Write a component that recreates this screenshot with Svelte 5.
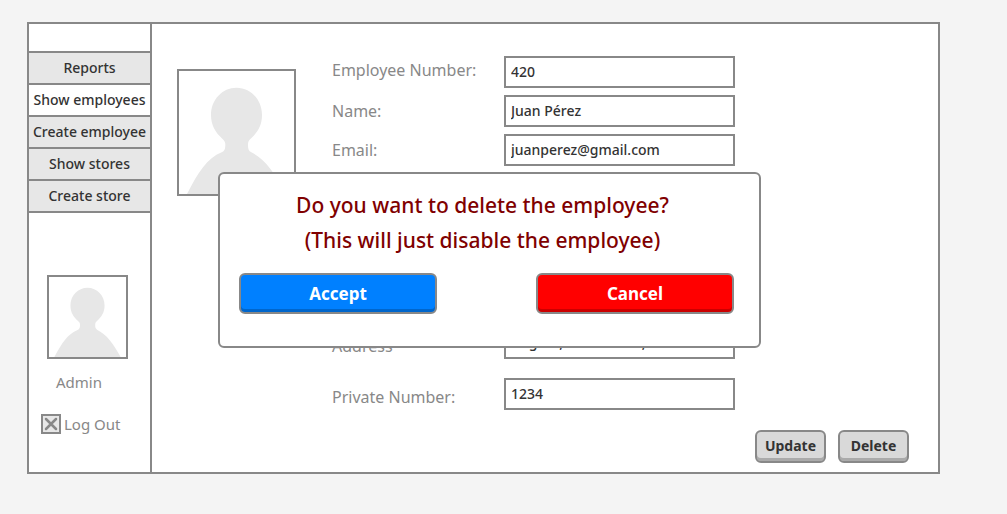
<script>
  const navItems = [
    { label: 'Reports', active: false },
    { label: 'Show employees', active: true },
    { label: 'Create employee', active: false },
    { label: 'Show stores', active: false },
    { label: 'Create store', active: false }
  ];

  let fields = $state([
    { id: 'number', label: 'Employee Number:', value: '420' },
    { id: 'name', label: 'Name:', value: 'Juan Pérez' },
    { id: 'email', label: 'Email:', value: 'juanperez@gmail.com' },
    { id: 'address', label: 'Address', value: 'Bogotá, Calle Norte, 12' },
    { id: 'private', label: 'Private Number:', value: '1234' }
  ]);
</script>

{#snippet silhouette()}
  <svg viewBox="0 0 345 369" preserveAspectRatio="none" aria-hidden="true">
    <path
      d="M172.500 50C130 50 96 86 96 132C96 164 110 185 130 203C137 209 139 214 139 221C139 232 137 240 128 244C84 262 58 304 24 369H321C286 304 258 265 217 244C209 240 207 233 207 224C207 213 208 209 215 203C235 185 249 164 249 132C249 86 215 50 172.500 50Z"
      fill="#e7e7e7"
    />
  </svg>
{/snippet}

<div class="page">
  <div class="frame">
    <aside class="sidebar">
      <nav>
        {#each navItems as item}
          <button type="button" class="nav-item" class:active={item.active}>{item.label}</button>
        {/each}
      </nav>
      <div class="photo small">{@render silhouette()}</div>
      <p class="user">Admin</p>
      <button type="button" class="logout">
        <svg viewBox="0 0 20 20" aria-hidden="true">
          <rect x="1" y="1" width="18" height="18" fill="#e7e7e7" stroke="#888" stroke-width="2" />
          <path d="M5 5L15 15M15 5L5 15" stroke="#888" stroke-width="2.500" stroke-linecap="round" />
        </svg>
        <span>Log Out</span>
      </button>
    </aside>

    <main>
      <div class="details">
        <div class="photo large">{@render silhouette()}</div>
        <form class="fields">
          {#each fields as field}
            <div class="field {field.id}">
              <label for={field.id}>{field.label}</label>
              <input id={field.id} type="text" bind:value={field.value} />
            </div>
          {/each}
        </form>
      </div>
      <div class="actions">
        <button type="button">Update</button>
        <button type="button">Delete</button>
      </div>
    </main>

    <div class="dialog" role="dialog" aria-modal="true" aria-labelledby="question">
      <p id="question">Do you want to delete the employee?<br />(This will just disable the employee)</p>
      <div class="choices">
        <button type="button" class="accept">Accept</button>
        <button type="button" class="cancel">Cancel</button>
      </div>
    </div>
  </div>
</div>

<style>
  :global(body) {
    background: #f4f4f4;
  }

  .page {
    box-sizing: border-box;
    padding: 22px 67px 40px 27px;
    font-family: 'Noto Sans', sans-serif;
    color: #888;
  }

  .page * {
    box-sizing: border-box;
  }

  button,
  input {
    font-family: inherit;
    margin: 0;
  }

  .frame {
    position: relative;
    display: flex;
    border: 2px solid #888;
    background: #fff;
  }

  .sidebar {
    flex: none;
    width: 123px;
    border-right: 2px solid #888;
    padding-top: 27px;
  }

  nav {
    display: flex;
    flex-direction: column;
    border-bottom: 2px solid #888;
  }

  .nav-item {
    height: 32px;
    padding: 0 0 2px;
    border: 0;
    border-top: 2px solid #888;
    background: #e7e7e7;
    color: #333;
    font-size: 14px;
    font-weight: 500;
    white-space: nowrap;
  }

  .nav-item.active {
    background: #fff;
  }

  .photo {
    flex: none;
    border: 2px solid #888;
    background: #fff;
  }

  .photo svg {
    display: block;
    width: 100%;
    height: 100%;
  }

  .small {
    width: 81px;
    height: 84px;
    margin: 62px 0 0 18px;
  }

  .large {
    width: 119px;
    height: 127px;
    margin-top: 13px;
  }

  .user {
    margin: 11px 0 0 27px;
    font-size: 15px;
    line-height: 24px;
  }

  .logout {
    display: flex;
    align-items: center;
    gap: 3px;
    margin: 18px 0 0 12px;
    padding: 0;
    border: 0;
    background: none;
    color: inherit;
    font-size: 15px;
    line-height: 24px;
  }

  .logout svg {
    width: 20px;
    height: 20px;
  }

  main {
    flex: 1;
    padding: 32px 29px 9px 25px;
  }

  .details {
    display: flex;
    align-items: flex-start;
    gap: 36px;
  }

  .fields {
    flex: 1;
    display: flex;
    flex-direction: column;
    gap: 7px;
  }

  .field {
    display: flex;
    align-items: center;
  }

  .number label {
    padding-bottom: 4px;
  }

  .address {
    margin-top: 154px;
  }

  .private {
    margin-top: 12px;
  }

  .address label,
  .private label {
    padding-top: 6px;
  }

  label {
    flex: none;
    width: 172px;
    font-size: 16px;
    line-height: 24px;
  }

  input {
    width: 100%;
    max-width: 231px;
    height: 32px;
    padding: 0 5px 2px;
    border: 2px solid #888;
    border-radius: 0;
    background: #fff;
    color: #333;
    font-size: 14px;
    font-weight: 500;
  }

  .actions {
    display: flex;
    justify-content: flex-end;
    gap: 12px;
    margin-top: 20px;
  }

  .actions button {
    width: 71px;
    height: 33px;
    padding: 0 0 2px;
    border: 2px solid #888;
    border-radius: 6px;
    background: #d9d9d9;
    box-shadow: inset 0 -3px #aaa;
    color: #333;
    font-size: 14px;
    font-weight: 700;
  }

  .dialog {
    position: absolute;
    top: 148px;
    left: 189px;
    right: 177px;
    padding: 14px 25px 32px 19px;
    border: 2px solid #888;
    border-radius: 6px;
    background: #fff;
  }

  .dialog p {
    margin: 0 0 15px;
    padding-right: 8px;
    color: #800000;
    font-size: 21px;
    font-weight: 500;
    line-height: 35px;
    text-align: center;
  }

  .choices {
    display: flex;
    justify-content: space-between;
  }

  .choices button {
    width: 40%;
    height: 41px;
    padding: 0;
    border: 2px solid #888;
    border-radius: 6px;
    color: #fff;
    font-size: 17px;
    font-weight: 700;
  }

  .accept {
    background: #0080ff;
    box-shadow: inset 0 -3px #0066cc;
  }

  .cancel {
    background: #f00;
    box-shadow: inset 0 -3px #c00;
  }
</style>
